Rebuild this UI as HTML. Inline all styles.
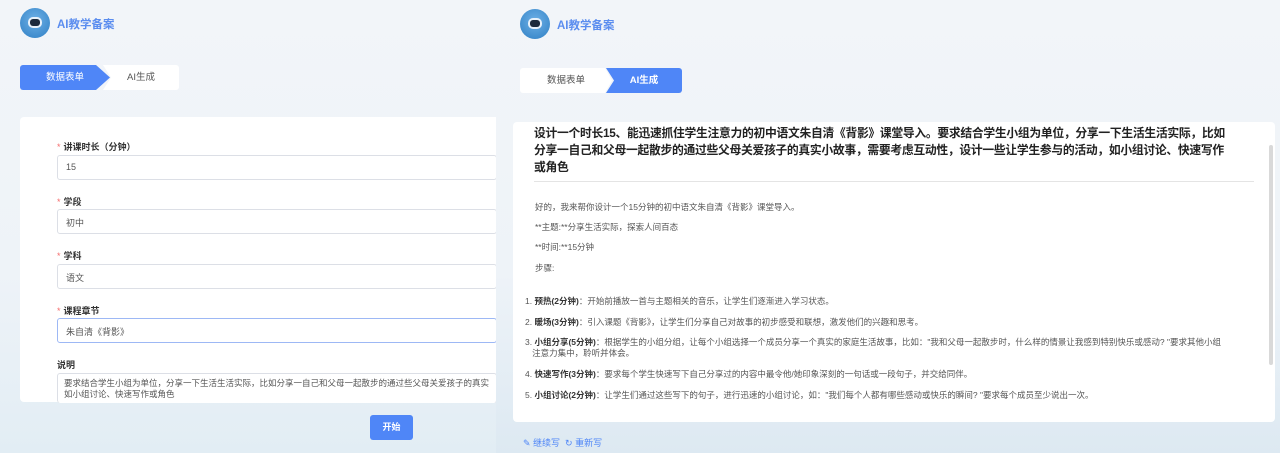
<!DOCTYPE html>
<html><head><meta charset="utf-8"><style>
*{margin:0;padding:0;box-sizing:border-box}
body{width:1280px;height:453px;overflow:hidden;font-family:"Liberation Sans","Noto Sans CJK SC",sans-serif;background:#eef3f8;position:relative}
.abs{position:absolute}
.panel{position:absolute;top:0;height:453px;background:linear-gradient(180deg,#f2f5f9 0%,#eef3f8 60%,#e2edf4 100%);overflow:hidden}
.logo{position:absolute;width:30px;height:30px;border-radius:50%;background:radial-gradient(circle at 50% 40%,#6db0e6,#2f7fc4)}
.logo:after{content:"";position:absolute;left:10px;top:11px;width:10px;height:7px;border-radius:3px;background:#1d2a3c;box-shadow:0 0 0 2px #e8f1fa}
.title{position:absolute;color:#5b8def;font-size:11.5px;font-weight:bold}
.tab{position:absolute;height:25px;line-height:25px;font-size:9.5px;text-align:center}
.card{position:absolute;background:#fff;border-radius:4px}
.lab{position:absolute;font-size:9px;font-weight:bold;color:#333}
.lab i{color:#f56c6c;font-style:normal;margin-right:3px;font-weight:normal}
.inp{position:absolute;left:57px;width:440px;height:25px;border:1px solid #dcdfe6;border-radius:3px;font-size:9px;color:#555;padding:6px 8px;background:#fff}
.p{position:absolute;left:525px;font-size:8.5px;color:#555;white-space:nowrap}
.p b{color:#333}
</style></head><body>
<div class="panel" style="left:0;width:500px">
 <div class="logo" style="left:20px;top:8px"></div>
 <div class="title" style="left:57px;top:16px">AI教学备案</div>
 <div class="tab" style="left:20px;top:65px;width:90px;background:#4f86f7;color:#fff;clip-path:polygon(0 0,76px 0,90px 50%,76px 100%,0 100%);border-radius:3px 0 0 3px">数据表单</div>
 <div class="tab" style="left:103px;top:65px;width:76px;background:#fff;color:#555;clip-path:polygon(0 0,100% 0,100% 100%,0 100%,8px 50%);border-radius:0 3px 3px 0">AI生成</div>
 <div class="card" style="left:20px;top:117px;width:480px;height:285px"></div>
 <div class="lab" style="left:57px;top:140px"><i>*</i>讲课时长（分钟）</div>
 <div class="inp" style="top:155px">15</div>
 <div class="lab" style="left:57px;top:195px"><i>*</i>学段</div>
 <div class="inp" style="top:209px">初中</div>
 <div class="lab" style="left:57px;top:249px"><i>*</i>学科</div>
 <div class="inp" style="top:264px">语文</div>
 <div class="lab" style="left:57px;top:304px"><i>*</i>课程章节</div>
 <div class="inp" style="top:318px;border-color:#9db8f5">朱自清《背影》</div>
 <div class="lab" style="left:57px;top:358px">说明</div>
 <div class="inp" style="top:373px;height:30px;padding:4px 6px;line-height:11px;white-space:nowrap;overflow:hidden;border-bottom:none;font-size:8.5px">要求结合学生小组为单位，分享一下生活生活实际，比如分享一自己和父母一起散步的通过些父母关爱孩子的真实<br>如小组讨论、快速写作或角色</div>
 <div class="abs" style="left:370px;top:415px;width:43px;height:25px;background:#4f86f7;border-radius:3px;color:#fff;font-size:9px;font-weight:bold;text-align:center;line-height:25px">开始</div>
</div>
<div class="panel" style="left:496px;width:784px;background:linear-gradient(180deg,#f2f5f9 0%,#eef3f8 60%,#dde9f2 100%)"></div>
<div class="logo" style="left:520px;top:9px"></div>
<div class="title" style="left:557px;top:17px">AI教学备案</div>
<div class="tab" style="left:520px;top:68px;width:92px;background:#fff;color:#555;clip-path:polygon(0 0,85px 0,92px 50%,85px 100%,0 100%);border-radius:3px 0 0 3px">数据表单</div>
<div class="tab" style="left:606px;top:68px;width:76px;background:#4f86f7;color:#fff;clip-path:polygon(0 0,100% 0,100% 100%,0 100%,8px 50%);border-radius:0 3px 3px 0;font-weight:bold">AI生成</div>
<div class="card" style="left:513px;top:122px;width:762px;height:300px"></div>
<div class="abs" style="left:1269px;top:145px;width:4px;height:220px;background:#d9d9d9;border-radius:2px"></div>
<div class="abs" style="left:534px;top:125px;font-size:11.8px;font-weight:bold;color:#222;line-height:17px;white-space:nowrap;letter-spacing:-0.3px">设计一个时长15、能迅速抓住学生注意力的初中语文朱自清《背影》课堂导入。要求结合学生小组为单位，分享一下生活生活实际，比如<br>分享一自己和父母一起散步的通过些父母关爱孩子的真实小故事，需要考虑互动性，设计一些让学生参与的活动，如小组讨论、快速写作<br>或角色</div>
<div class="abs" style="left:534px;top:181px;width:720px;height:1px;background:#e4e4e4"></div>
<div class="p" style="left:535px;top:201px">好的，我来帮你设计一个15分钟的初中语文朱自清《背影》课堂导入。</div>
<div class="p" style="left:535px;top:221px">**主题:**分享生活实际，探索人间百态</div>
<div class="p" style="left:535px;top:241px">**时间:**15分钟</div>
<div class="p" style="left:535px;top:262px">步骤:</div>
<div class="p" style="top:295px">1. <b>预热(2分钟)</b>：开始前播放一首与主题相关的音乐，让学生们逐渐进入学习状态。</div>
<div class="p" style="top:316px">2. <b>暖场(3分钟)</b>：引入课题《背影》，让学生们分享自己对故事的初步感受和联想，激发他们的兴趣和思考。</div>
<div class="p" style="top:337px;line-height:11px">3. <b>小组分享(5分钟)</b>：根据学生的小组分组，让每个小组选择一个成员分享一个真实的家庭生活故事，比如："我和父母一起散步时，什么样的情景让我感到特别快乐或感动? "要求其他小组<br>&nbsp;&nbsp;&nbsp;注意力集中，聆听并体会。</div>
<div class="p" style="top:368px">4. <b>快速写作(3分钟)</b>：要求每个学生快速写下自己分享过的内容中最令他/她印象深刻的一句话或一段句子，并交给同伴。</div>
<div class="p" style="top:389px">5. <b>小组讨论(2分钟)</b>：让学生们通过这些写下的句子，进行迅速的小组讨论，如："我们每个人都有哪些感动或快乐的瞬间? "要求每个成员至少说出一次。</div>
<div class="p" style="left:523px;top:436px;color:#4f86f7;font-size:9px">✎ 继续写 &nbsp;↻ 重新写</div>
</body></html>
